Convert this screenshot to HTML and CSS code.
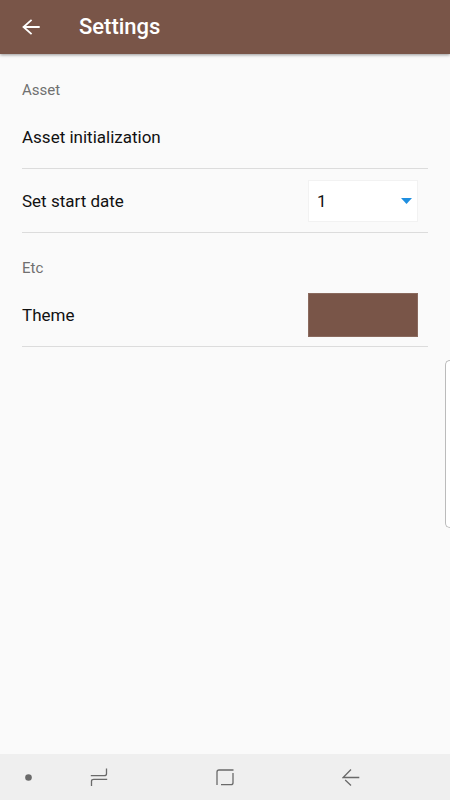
FILE: index.html
```html
<!DOCTYPE html>
<html lang="en">
<head>
    <meta charset="UTF-8">
    <meta name="viewport" content="width=device-width, initial-scale=1.0">
    <title>Settings</title>
    <link rel="stylesheet" href="styles.css">
</head>
<body>
    <header class="app-bar">
        <button class="icon-btn" type="button" aria-label="Back">
            <svg width="18" height="16" viewBox="0 0 18 16" fill="none" stroke="currentColor" stroke-width="1.8">
                <path d="M17.7 8H1.5M9.6 .8L1.5 8l8.1 7.2"/>
            </svg>
        </button>
        <h1>Settings</h1>
    </header>

    <main>
        <section>
            <h2>Asset</h2>
            <div class="row">
                <button class="row-btn" type="button">Asset initialization</button>
            </div>
            <div class="row">
                <label for="start-date">Set start date</label>
                <div class="select-box">
                    <select id="start-date">
                        <option>1</option>
                        <option>2</option>
                        <option>3</option>
                        <option>4</option>
                        <option>5</option>
                    </select>
                    <svg class="caret" width="11" height="6" viewBox="0 0 11 6">
                        <path d="M0 0h11L5.5 6z" fill="#1f8fe0"/>
                    </svg>
                </div>
            </div>
        </section>

        <section>
            <h2>Etc</h2>
            <div class="row">
                <span id="theme-label">Theme</span>
                <button class="swatch" type="button" aria-labelledby="theme-label"></button>
            </div>
        </section>
    </main>

    <!-- edge panel handle -->
    <div class="edge-handle"></div>

    <nav class="nav-bar">
        <button class="dot-btn" type="button" aria-label="Hide navigation bar">
            <svg width="7" height="7" viewBox="0 0 7 7"><circle cx="3.5" cy="3.5" r="3.3" fill="currentColor"/></svg>
        </button>
        <button type="button" aria-label="Recent apps">
            <svg width="18" height="18" viewBox="0 0 18 18" fill="none" stroke="currentColor" stroke-width="1.3">
                <path d="M.8 7.7h13.4q2.3 0 2.3-2V.5M17.2 11.3H3.8q-2.3 0-2.3 2v4.7"/>
            </svg>
        </button>
        <button type="button" aria-label="Home">
            <svg width="18" height="18" viewBox="0 0 18 18" fill="none" stroke="currentColor" stroke-width="1.3">
                <path d="M1 17V4q0-2 2-2h14.5M17 5v9.7q0 2-2 2H5"/>
            </svg>
        </button>
        <button type="button" aria-label="Back">
            <svg width="18" height="18" viewBox="0 0 18 18" fill="none" stroke="currentColor" stroke-width="1.3">
                <path d="M17.3 9.5H1.2L9 1.5M3.2 12L9 17.5"/>
            </svg>
        </button>
    </nav>
</body>
</html>
```

FILE: styles.css
```css
* {
    box-sizing: border-box;
}

body {
    margin: 0;
    min-height: 100vh;
    display: flex;
    flex-direction: column;
    font-family: Roboto, sans-serif;
    font-size: 17px;
    line-height: 20px;
    background: #fafafa;
    color: #111;
}

button {
    display: flex;
    align-items: center;
    justify-content: center;
    padding: 0;
    border: none;
    background: none;
    color: inherit;
    font: inherit;
    cursor: pointer;
}

.app-bar {
    display: flex;
    align-items: center;
    gap: 39px;
    height: 54px;
    padding: 0 22px;
    background: #795548;
    color: #fff;
    box-shadow: 0 1px 3px rgba(0, 0, 0, 0.4);
}

.app-bar h1 {
    margin: 0;
    font-size: 22px;
    font-weight: 500;
    line-height: 24px;
}

.icon-btn {
    height: 24px;
}

main {
    flex: 1;
    padding: 21px 22px;
}

section + section {
    margin-top: 20px;
}

h2 {
    margin: 0;
    font-size: 15px;
    font-weight: 400;
    line-height: 30px;
    color: #707070;
}

.row {
    display: flex;
    align-items: center;
    justify-content: space-between;
    height: 64px;
    padding: 1px 10px 0 0;
    border-bottom: 1px solid #dcdcdc;
}

.row-btn {
    flex: 1;
    height: 100%;
    justify-content: flex-start;
}

.select-box {
    position: relative;
    width: 110px;
    height: 42px;
}

.select-box select {
    width: 100%;
    height: 100%;
    padding: 0 8px;
    border: 1px solid #f2f2f2;
    border-radius: 0;
    appearance: none;
    background: #fff;
    color: inherit;
    font: inherit;
}

.caret {
    position: absolute;
    top: 18px;
    right: 6px;
    pointer-events: none;
}

.swatch {
    width: 110px;
    height: 44px;
    border: 1px solid #8a6a5e;
    background: #795548;
}

.edge-handle {
    position: fixed;
    top: 45%;
    right: 0;
    width: 5px;
    height: 21%;
    border: 1px solid #bbb;
    border-right: none;
    border-radius: 5px 0 0 5px;
    background: #fff;
}

.nav-bar {
    display: grid;
    grid-template-columns: 8% 28% 28% 28%;
    height: 46px;
    background: #efefef;
    color: #6a6a6a;
}

.nav-bar .dot-btn {
    justify-content: flex-end;
    padding-right: 4px;
}
```
